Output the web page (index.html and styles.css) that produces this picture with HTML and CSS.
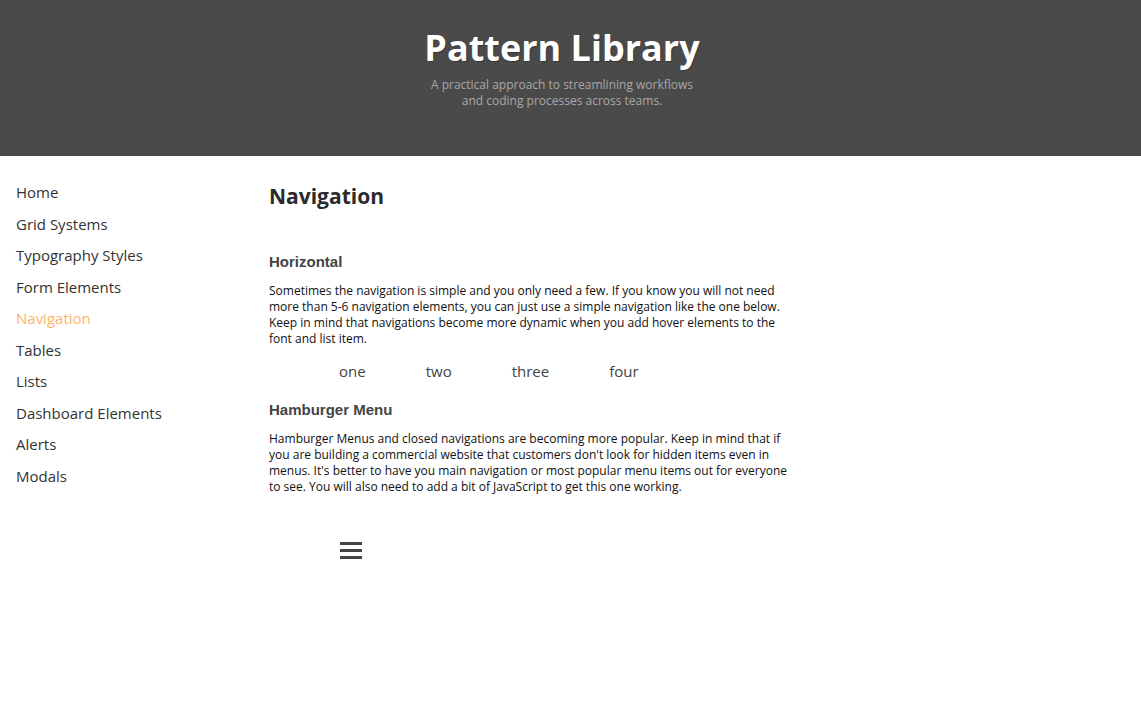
FILE: index.html
```html
<!DOCTYPE html>
<html lang="en">
<head>
<meta charset="utf-8">
<title>Pattern Library</title>
<link rel="stylesheet" href="styles.css">
</head>
<body>
<header class="site-header">
  <h1 class="site-title">Pattern Library</h1>
  <p class="site-subtitle">A practical approach to streamlining workflows and coding processes across teams.</p>
</header>
<div class="layout">
  <nav class="sidebar">
    <ul class="side-list">
      <li><a href="#">Home</a></li>
      <li><a href="#">Grid Systems</a></li>
      <li><a href="#">Typography Styles</a></li>
      <li><a href="#">Form Elements</a></li>
      <li><a href="#" class="active">Navigation</a></li>
      <li><a href="#">Tables</a></li>
      <li><a href="#">Lists</a></li>
      <li><a href="#">Dashboard Elements</a></li>
      <li><a href="#">Alerts</a></li>
      <li><a href="#">Modals</a></li>
    </ul>
  </nav>
  <main class="content">
    <h2 class="page-title">Navigation</h2>
    <h3 class="section-title first">Horizontal</h3>
    <p class="text">Sometimes the navigation is simple and you only need a few. If you know you will not need more than 5-6 navigation elements, you can just use a simple navigation like the one below. Keep in mind that navigations become more dynamic when you add hover elements to the font and list item.</p>
    <ul class="demo-nav">
      <li>one</li>
      <li>two</li>
      <li>three</li>
      <li>four</li>
    </ul>
    <h3 class="section-title">Hamburger Menu</h3>
    <p class="text">Hamburger Menus and closed navigations are becoming more popular. Keep in mind that if you are building a commercial website that customers don't look for hidden items even in menus. It's better to have you main navigation or most popular menu items out for everyone to see. You will also need to add a bit of JavaScript to get this one working.</p>
    <div class="burger" aria-label="menu">
      <span class="bar"></span>
      <span class="bar"></span>
      <span class="bar"></span>
    </div>
  </main>
</div>
</body>
</html>
```

FILE: styles.css
```css
* { box-sizing: border-box; }

html, body {
  margin: 0;
  padding: 0;
  background: #fff;
  font-family: "Open Sans", "Noto Sans", sans-serif;
  color: #222;
}

.site-header {
  background: #4a4a4a;
  height: 156px;
  display: flex;
  flex-direction: column;
  align-items: center;
  padding: 24px 17px 0 0;
}

.site-title {
  margin: 0;
  font-size: 36px;
  line-height: 48px;
  font-weight: 700;
  color: #fff;
  text-shadow: 1px 1px 1px rgba(0,0,0,0.25);
}

.site-subtitle {
  margin: 5px 0 0;
  max-width: 275px;
  text-align: center;
  font-size: 12px;
  line-height: 16px;
  color: #a8a8a8;
}

.layout {
  display: flex;
}

.sidebar {
  width: 269px;
  flex: none;
  padding: 21px 0 0 16px;
}

.side-list {
  list-style: none;
  margin: 0;
  padding: 0;
}

.side-list li {
  line-height: 31.55px;
  font-size: 15px;
}

.side-list a {
  color: #333;
  text-decoration: none;
}

.side-list a.active {
  color: #fdb46b;
}

.content {
  padding-top: 25px;
  width: 525px;
}

.page-title {
  margin: 0;
  font-size: 21px;
  line-height: 30px;
  font-weight: 700;
  color: #2b2b2b;
}

.section-title {
  margin: 19px 0 0;
  font-family: "Liberation Sans", Arial, sans-serif;
  font-size: 15px;
  line-height: 20px;
  font-weight: 700;
  color: #444;
}

.section-title.first {
  margin-top: 41px;
}

.text {
  margin: 11px 0 0;
  font-size: 12px;
  line-height: 16px;
  color: #111;
}

.demo-nav {
  list-style: none;
  display: flex;
  margin: 14px 0 0;
  padding: 0 0 0 40px;
}

.demo-nav li {
  padding: 0 30px;
  font-size: 15px;
  line-height: 20px;
  color: #444;
}

.burger {
  margin: 47px 0 0 71px;
  width: 22px;
  display: flex;
  flex-direction: column;
  gap: 4px;
}

.bar {
  display: block;
  height: 3px;
  background: #444;
}
```
